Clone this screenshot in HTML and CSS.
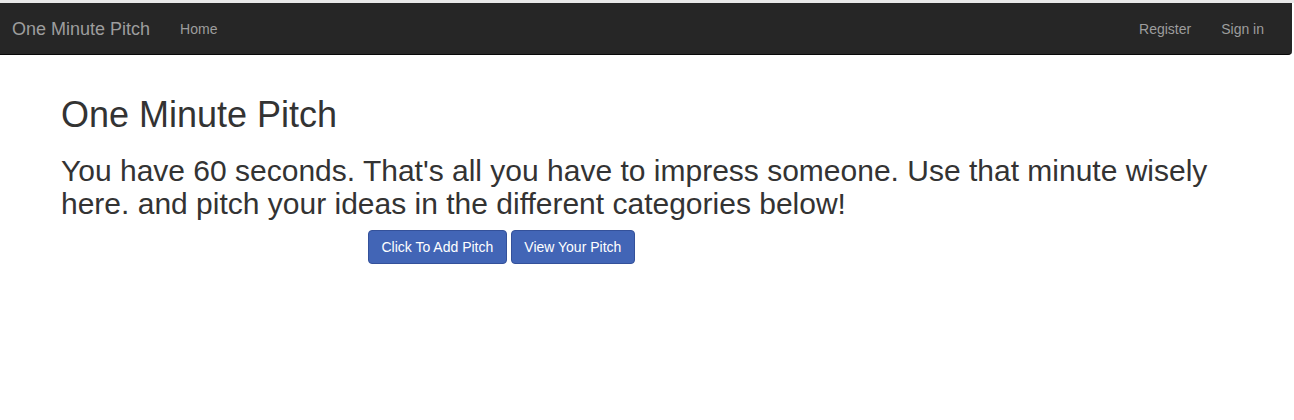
FILE: index.html
```html
<!DOCTYPE html>
<html>
<head>
<meta charset="utf-8">
<link rel="stylesheet" href="styles.css">
</head>
<body>
<div class="topstrip"></div>
<nav class="navbar">
  <div class="nav-left">
    <a class="brand" href="#">One Minute Pitch</a>
    <a class="nav-link" href="#">Home</a>
  </div>
  <div class="nav-right">
    <a class="nav-link" href="#">Register</a>
    <a class="nav-link" href="#">Sign in</a>
  </div>
</nav>
<main class="jumbotron">
  <h1 class="title">One Minute Pitch</h1>
  <h2 class="lead">You have 60 seconds. That's all you have to impress someone. Use that minute wisely here. and pitch your ideas in the different categories below!</h2>
  <div class="actions">
    <a class="btn" href="#">Click To Add Pitch</a>
    <a class="btn" href="#">View Your Pitch</a>
  </div>
</main>
</body>
</html>
```
FILE: styles.css
```css
html, body {
  margin: 0;
  padding: 0;
  background: #fff;
  font-family: "Liberation Sans", Arial, sans-serif;
  font-size: 14px;
  color: #333;
}
.topstrip {
  height: 3px;
  background: #e8e8e8;
}
.navbar {
  display: flex;
  justify-content: space-between;
  align-items: center;
  height: 50px;
  padding: 1px 13px 0 0;
  margin-right: 2px;
  background: #262626;
  border-bottom: 1px solid #080808;
  border-radius: 0 0 4px 0;
}
.nav-left, .nav-right {
  display: flex;
  align-items: center;
  height: 100%;
}
.brand {
  font-size: 18px;
  line-height: 20px;
  color: #9d9d9d;
  text-decoration: none;
  padding: 15px 15px 15px 12px;
}
.nav-link {
  font-size: 14px;
  line-height: 20px;
  color: #9d9d9d;
  text-decoration: none;
  padding: 15px 15px;
}
.jumbotron {
  padding: 30px 61px;
}
.title {
  font-size: 36px;
  font-weight: 500;
  line-height: 1.1;
  margin: 10px 0 19px;
  color: #333;
}
.lead {
  font-size: 30px;
  font-weight: 500;
  line-height: 1.1;
  margin: 0 0 10px;
  color: #333;
}
.actions {
  display: flex;
  gap: 4px;
  padding-left: 307px;
}
.btn {
  display: inline-block;
  padding: 6px 12.5px;
  font-size: 14px;
  line-height: 20px;
  color: #fff;
  background: #4265b6;
  border: 1px solid #34519a;
  border-radius: 4px;
  text-decoration: none;
}
```
